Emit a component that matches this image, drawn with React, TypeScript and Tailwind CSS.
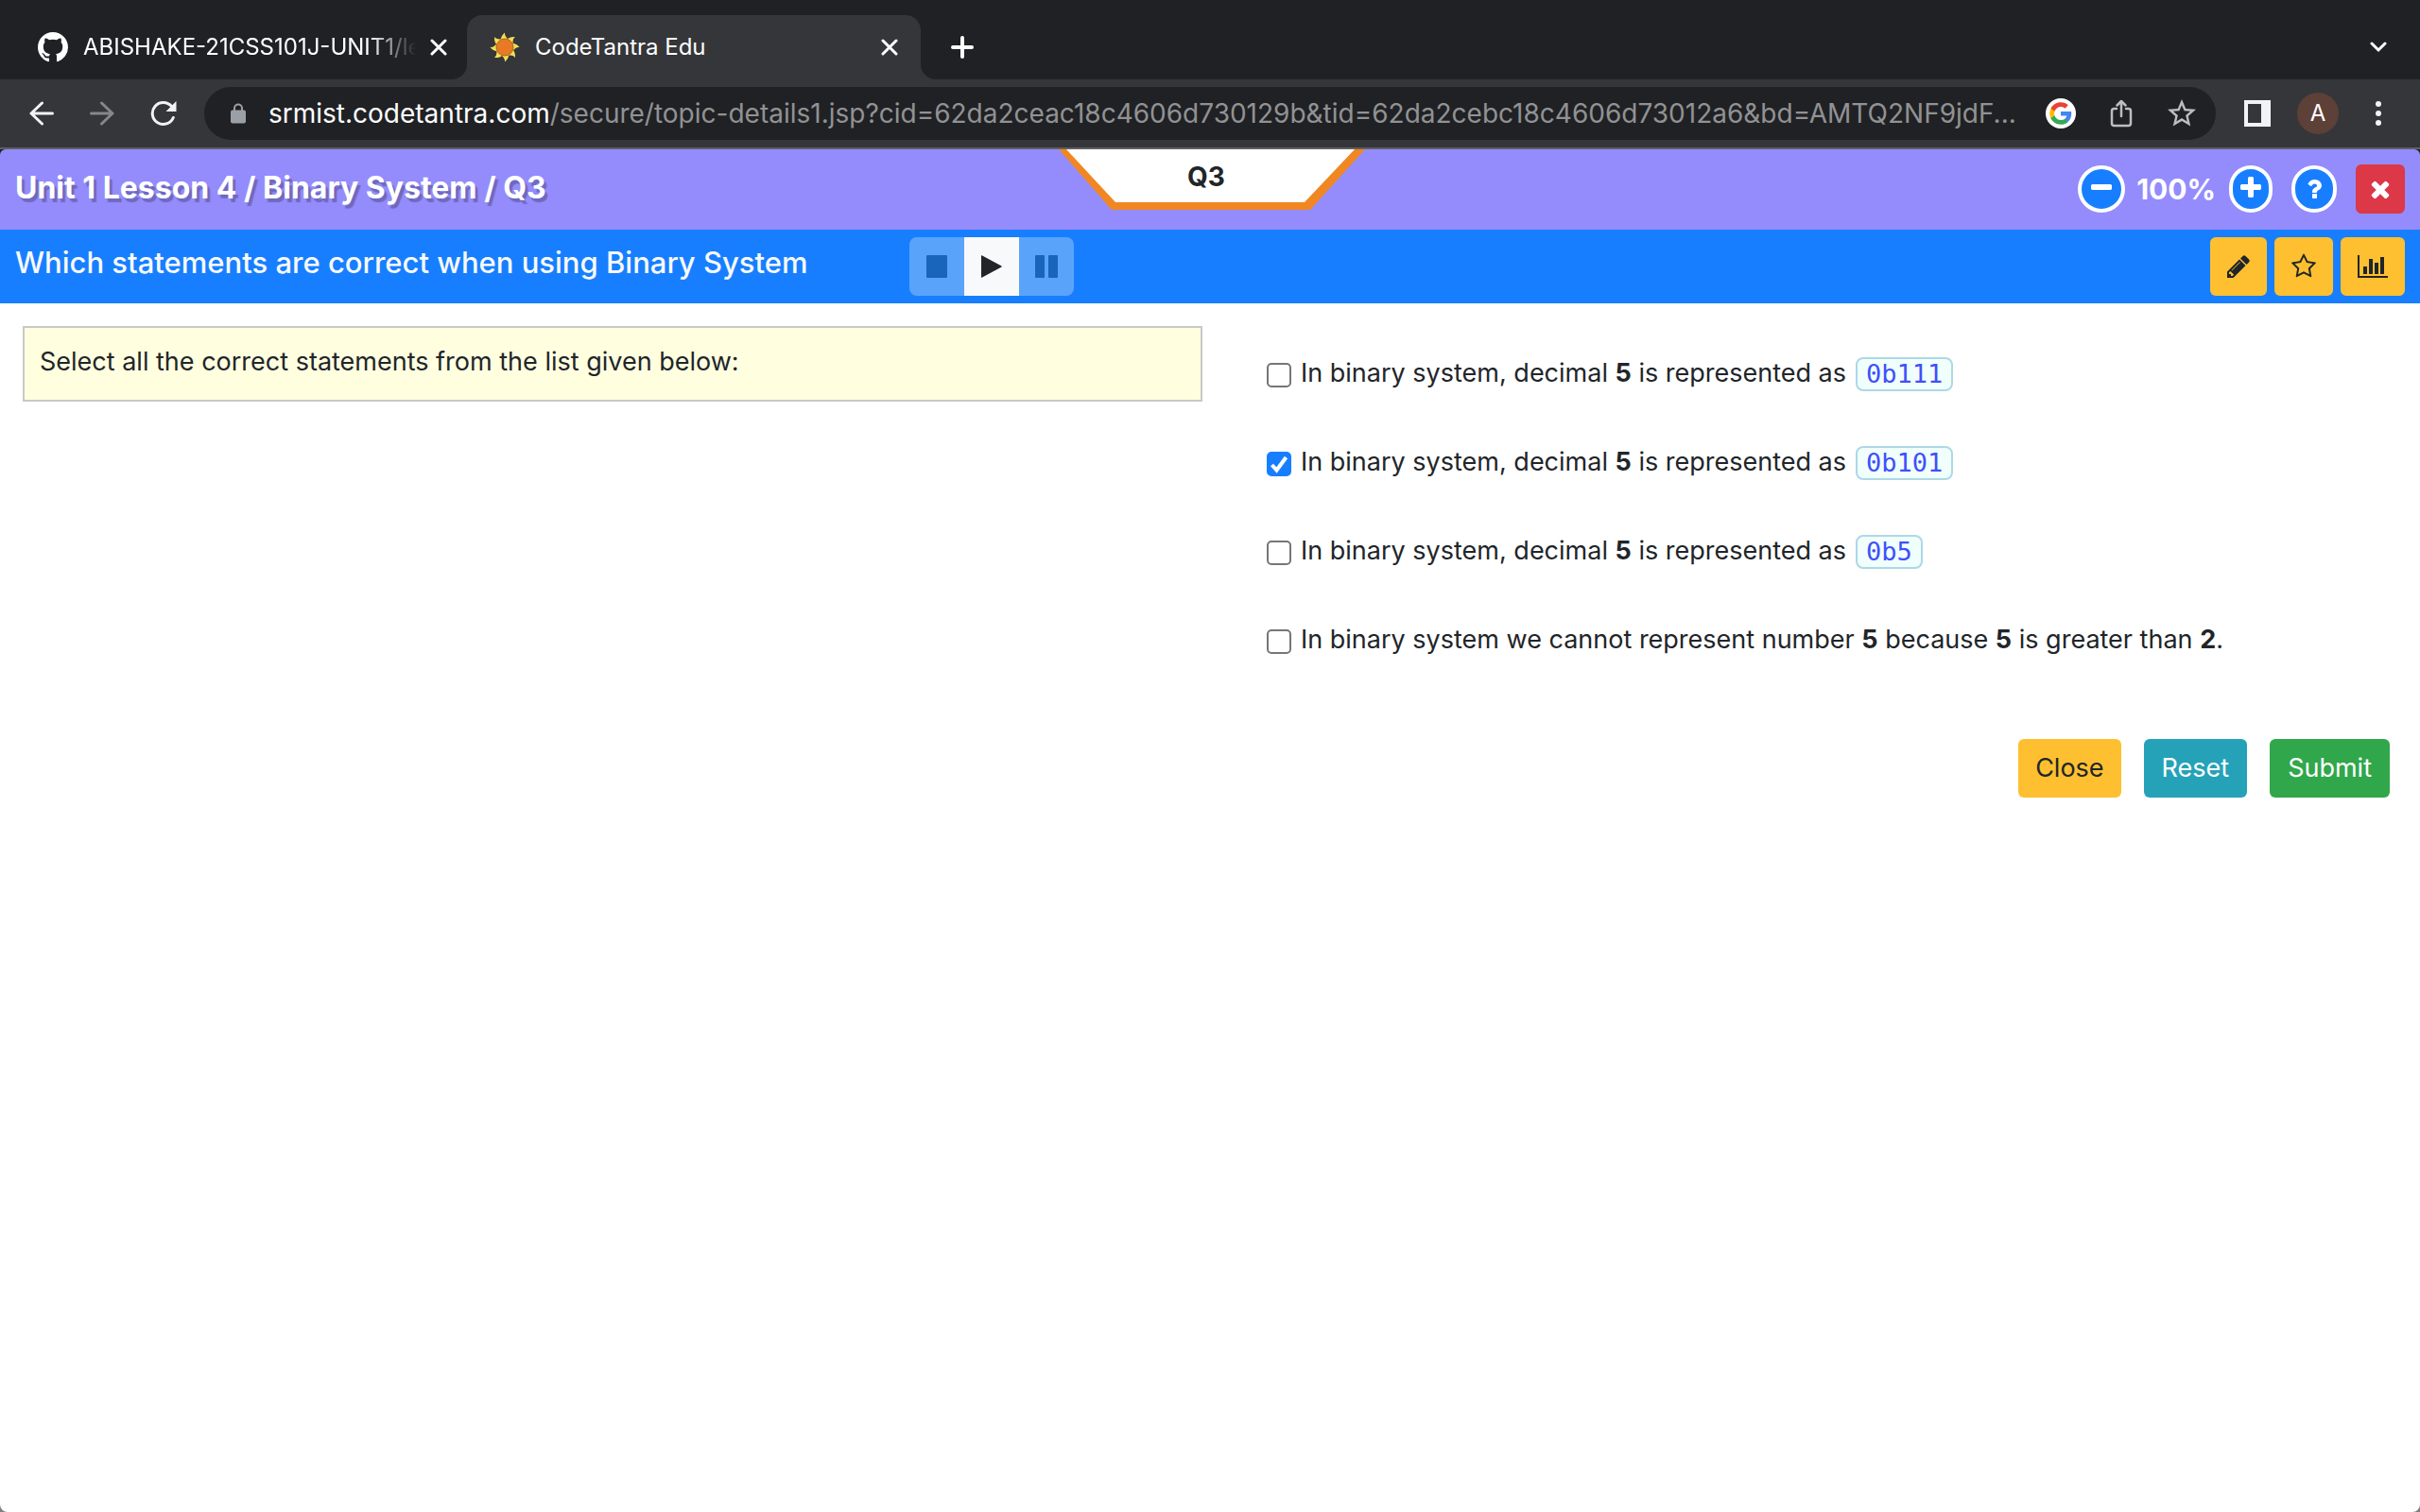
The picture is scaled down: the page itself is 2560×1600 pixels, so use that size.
import React, { useState } from "react";

const GLYPHS = {
  minus:
    "M1600 736v192q0 40-28 68t-68 28h-1216q-40 0-68-28t-28-68v-192q0-40 28-68t68-28h1216q40 0 68 28t28 68z",
  plus:
    "M1600 736v192q0 40-28 68t-68 28h-416v416q0 40-28 68t-68 28h-192q-40 0-68-28t-28-68v-416h-416q-40 0-68-28t-28-68v-192q0-40 28-68t68-28h416v-416q0-40 28-68t68-28h192q40 0 68 28t28 68v416h416q40 0 68 28t28 68z",
  help:
    "M1088 1256v240q0 16-12 28t-28 12h-240q-16 0-28-12t-12-28v-240q0-16 12-28t28-12h240q16 0 28 12t12 28zm316-600q0 54-15.5 101t-35 76.5-55 59.5-57.5 43.5-61 35.5q-41 23-68.5 65t-27.5 67q0 17-12 32.5t-28 15.5h-240q-15 0-25.5-18.5t-10.5-37.5v-45q0-83 65-156.5t143-108.5q59-27 84-56t25-76q0-42-46.5-74t-107.5-32q-65 0-108 29-35 25-107 115-13 16-31 16-12 0-25-8l-164-125q-13-10-15.5-25t5.5-28q160-266 464-266 80 0 161 31t146 83 106 127.5 41 158.5z",
  times:
    "M1490 1322q0 40-28 68l-136 136q-28 28-68 28t-68-28l-294-294-294 294q-28 28-68 28t-68-28l-136-136q-28-28-28-68t28-68l294-294-294-294q-28-28-28-68t28-68l136-136q28-28 68-28t68 28l294 294 294-294q28-28 68-28t68 28l136 136q28 28 28 68t-28 68l-294 294 294 294q28 28 28 68z",
  pencil:
    "M491 1536l91-91-235-235-91 91v107h128v128h107zm523-928q0-22-22-22-10 0-17 7l-542 542q-7 7-7 17 0 22 22 22 10 0 17-7l542-542q7-7 7-17zm-54-192l416 416-832 832h-416v-416zm683 96q0 53-37 90l-166 166-416-416 166-165q36-38 90-38 53 0 91 38l235 234q37 39 37 91z",
  star:
    "M1201 1004l306-297-422-62-189-382-189 382-422 62 306 297-73 421 378-199 377 199zm527-357q0 22-26 48l-363 354 86 500q1 7 1 20 0 50-41 50-19 0-40-12l-449-236-449 236q-22 12-40 12-21 0-31.5-14.5t-10.5-35.5q0-6 2-20l86-500-364-354q-25-27-25-48 0-37 56-46l502-73 225-455q19-41 49-41t49 41l225 455 502 73q56 9 56 46z",
  chart:
    "M640 896v512h-256v-512h256zm384-512v1024h-256v-1024h256zm1024 1152v128h-2048v-1536h128v1408h1920zm-640-896v768h-256v-768h256zm384-384v1152h-256v-1152h256z",
};

function Glyph({ name }: { name: keyof typeof GLYPHS }) {
  const wide = name === "chart";
  return (
    <svg
      viewBox={wide ? "0 0 2048 1792" : "0 0 1792 1792"}
      className={wide ? "h-7 w-8" : "size-7"}
      fill="currentColor"
      aria-hidden="true"
    >
      <path d={GLYPHS[name]} />
    </svg>
  );
}

function TabClose() {
  return (
    <svg viewBox="0 0 18 18" className="size-[18px]" aria-hidden="true">
      <path d="M2 2L16 16M16 2L2 16" stroke="#fff" strokeWidth="3" strokeLinecap="round" />
    </svg>
  );
}

function Sun() {
  const rays = [0, 45, 90, 135, 180, 225, 270, 315];
  return (
    <svg viewBox="0 0 32 32" className="size-8" aria-hidden="true">
      {rays.map((a) => (
        <path
          key={a}
          d="M11.500 9C12 5.500 13 3 16 0.500C15.500 3.500 17.500 5.500 20.500 8.500L16 14Z"
          fill="#f3df55"
          transform={`rotate(${a} 16 16)`}
        />
      ))}
      <circle cx="16" cy="16" r="9" fill="#e87a26" stroke="#a8641f" strokeWidth="1" />
    </svg>
  );
}

function TabStrip() {
  return (
    <div className="flex h-21 items-end bg-[#202124] text-2xl text-white">
      <div className="flex h-17 w-[494px] items-center pl-10">
        <svg viewBox="0 0 16 16" className="size-8 shrink-0" fill="#fff" aria-hidden="true">
          <path d="M8 0C3.58 0 0 3.58 0 8c0 3.54 2.29 6.53 5.47 7.59.4.07.55-.17.55-.38 0-.19-.01-.82-.01-1.490-2.010.37-2.530-.49-2.690-.94-.09-.23-.48-.94-.82-1.130-.28-.15-.68-.52-.01-.53.63-.01 1.080.58 1.230.82.72 1.210 1.870.87 2.330.66.07-.52.28-.87.51-1.070-1.780-.2-3.640-.89-3.640-3.950 0-.87.31-1.590.82-2.150-.08-.2-.36-1.020.08-2.120 0 0 .67-.21 2.200.82.64-.18 1.320-.27 2-.27.68 0 1.360.09 2 .27 1.530-1.040 2.200-.82 2.200-.82.44 1.100.16 1.920.08 2.120.51.56.82 1.270.82 2.150 0 3.070-1.870 3.750-3.650 3.950.29.25.54.73.54 1.480 0 1.070-.01 1.930-.01 2.200 0 .21.15.46.55.38A8.013 8.013 0 0016 8c0-4.420-3.580-8-8-8z" />
        </svg>
        <span className="ml-4 w-[352px] overflow-hidden whitespace-nowrap [mask-image:linear-gradient(to_right,#000_86%,transparent)]">
          ABISHAKE-21CSS101J-UNIT1/le
        </span>
        <button type="button" aria-label="Close tab" className="ml-[15px]">
          <TabClose />
        </button>
      </div>
      <div className="relative flex h-17 w-[480px] items-center rounded-t-2xl bg-[#35363a] pr-6 pl-6">
        <svg viewBox="0 0 16 16" className="absolute bottom-0 -left-4 size-4" aria-hidden="true">
          <path d="M16 0V16H0A16 16 0 0 0 16 0Z" fill="#35363a" />
        </svg>
        <svg viewBox="0 0 16 16" className="absolute -right-4 bottom-0 size-4" aria-hidden="true">
          <path d="M0 0V16H16A16 16 0 0 1 0 0Z" fill="#35363a" />
        </svg>
        <Sun />
        <span className="ml-4">CodeTantra Edu</span>
        <button type="button" aria-label="Close tab" className="ml-auto">
          <TabClose />
        </button>
      </div>
      <button type="button" aria-label="New tab" className="ml-8 flex h-17 items-center">
        <svg viewBox="0 0 24 24" className="size-6" aria-hidden="true">
          <path d="M12 2V22M2 12H22" stroke="#fff" strokeWidth="4" strokeLinecap="round" />
        </svg>
      </button>
      <button type="button" aria-label="Search tabs" className="mr-[35px] ml-auto flex h-17 items-center">
        <svg viewBox="0 0 18 12" className="h-3 w-[18px]" aria-hidden="true">
          <path d="M2 2L9 9L16 2" fill="none" stroke="#fff" strokeWidth="3" strokeLinecap="round" />
        </svg>
      </button>
    </div>
  );
}

function Toolbar() {
  return (
    <div className="flex h-[74px] items-center border-b-2 border-[#5f6063] bg-[#35363a] pr-[41px] pl-[31px]">
      <button type="button" aria-label="Back">
        <svg viewBox="0 0 26 26" className="size-[26px]" fill="none" stroke="#f1f3f4" strokeWidth="3" strokeLinecap="round" strokeLinejoin="round">
          <path d="M24.500 13H2M13.500 2L2 13L13.500 24" />
        </svg>
      </button>
      <button type="button" aria-label="Forward" className="ml-[38px]">
        <svg viewBox="0 0 26 26" className="size-[26px]" fill="none" stroke="#86878a" strokeWidth="3" strokeLinecap="round" strokeLinejoin="round">
          <path d="M1.500 13H24M12.500 2L24 13L12.500 24" />
        </svg>
      </button>
      <button type="button" aria-label="Reload" className="ml-[38px]">
        <svg viewBox="0 0 28 28" className="size-7">
          <path d="M24.300 18.500A11.500 11.500 0 1 1 22.500 6.500" fill="none" stroke="#f1f3f4" strokeWidth="3" strokeLinecap="round" />
          <path d="M27.500 1V12H16.500Z" fill="#f1f3f4" />
        </svg>
      </button>
      <div className="ml-[29px] flex h-14 min-w-0 flex-1 items-center rounded-full bg-[#202124] pr-[18px] pl-7">
        <svg viewBox="0 0 16 22" className="h-[22px] w-4 shrink-0" aria-hidden="true">
          <path d="M4 9V5.500A4 4 0 0 1 12 5.500V9" fill="none" stroke="#9aa0a6" strokeWidth="2" />
          <rect y="7.500" width="16" height="14" rx="2" fill="#9aa0a6" />
        </svg>
        <div role="textbox" aria-label="Address" className="ml-6 min-w-0 flex-1 truncate text-[28px] leading-10 text-[#919294]">
          <span className="text-white">srmist.codetantra.com</span>
          /secure/topic-details1.jsp?cid=62da2ceac18c4606d730129b&amp;tid=62da2cebc18c4606d73012a6&amp;bd=AMTQ2NF9jdF...
        </div>
        <button type="button" aria-label="Search with Google" className="ml-4 flex size-8 shrink-0 items-center justify-center rounded-full bg-white">
          <svg viewBox="0 0 48 48" className="size-6">
            <path fill="#4285f4" d="M46.500 24.500c0-1.600-.2-3.200-.5-4.700H24v9h12.600c-.5 2.900-2.200 5.400-4.700 7v5.900h7.600c4.500-4.100 7-10.200 7-17.200z" />
            <path fill="#34a853" d="M24 47.500c6.400 0 11.700-2.100 15.600-5.700L32 35.900c-2.100 1.400-4.800 2.300-8 2.300-6.100 0-11.300-4.100-13.200-9.700H3v6.100C6.900 42.300 14.800 47.500 24 47.500z" />
            <path fill="#fbbc05" d="M10.800 28.500c-.5-1.400-.7-3-.7-4.500s.3-3.100.7-4.500v-6.100H3C1.400 16.600.5 20.200.5 24S1.400 31.400 3 34.600z" />
            <path fill="#ea4335" d="M24 9.800c3.400 0 6.500 1.200 9 3.500l6.700-6.700C35.700 2.800 30.400.5 24 .5 14.800.5 6.900 5.700 3 13.400l7.800 6.100C12.700 13.900 17.900 9.800 24 9.800z" />
          </svg>
        </button>
        <button type="button" aria-label="Share" className="ml-9">
          <svg viewBox="0 0 24 30" className="h-[30px] w-6" fill="none" stroke="#bcbdbe" strokeWidth="2.500" strokeLinecap="round" strokeLinejoin="round">
            <path d="M7 10H4.500A2.500 2.500 0 0 0 2 12.500V25.500A2.500 2.500 0 0 0 4.500 28H19.500A2.500 2.500 0 0 0 22 25.500V12.500A2.500 2.500 0 0 0 19.500 10H17M12 18V2.500M7.500 6.500L12 2L16.500 6.500" />
          </svg>
        </button>
        <button type="button" aria-label="Bookmark" className="ml-[34px]">
          <svg viewBox="0 0 24 24" className="size-9" fill="#bcbdbe">
            <path d="M22 9.240l-7.190-.62L12 2 9.190 8.630 2 9.240l5.460 4.730L5.820 21 12 17.270 18.180 21l-1.630-7.030L22 9.240zM12 15.400l-3.760 2.270 1-4.280-3.320-2.880 4.380-.38L12 6.100l1.710 4.040 4.380.38-3.320 2.880 1 4.280L12 15.400z" />
          </svg>
        </button>
      </div>
      <button type="button" aria-label="Side panel" className="ml-[30px]">
        <svg viewBox="0 0 28 28" className="size-7">
          <path fillRule="evenodd" d="M0 0H28V28H0ZM4 4V24H18V4Z" fill="#f1f3f4" />
        </svg>
      </button>
      <button type="button" aria-label="Profile" className="ml-7 flex size-11 items-center justify-center rounded-full bg-[#5d4037] text-2xl text-white">
        A
      </button>
      <button type="button" aria-label="Menu" className="ml-[39px]">
        <svg viewBox="0 0 6 26" className="h-[26px] w-[6px]" fill="#f1f3f4">
          <circle cx="3" cy="3" r="3" />
          <circle cx="3" cy="13" r="3" />
          <circle cx="3" cy="23" r="3" />
        </svg>
      </button>
    </div>
  );
}

function LessonHeader() {
  return (
    <div className="bg-[#202124]">
      <header className="relative flex h-[85px] items-center justify-between rounded-t-md bg-[#948cfc] px-4 text-white">
        <h1 className="pb-1 text-[32px] leading-10 font-bold [text-shadow:3px_4px_1px_rgba(0,0,0,0.25)]">
          Unit 1 Lesson 4 / Binary System / Q3
        </h1>
        <div className="absolute top-0 left-1/2 h-16 w-82 -translate-x-1/2">
          <svg viewBox="0 0 328 64" className="h-16 w-82" aria-hidden="true">
            <path d="M4 0H328L270 64H60Z" fill="#f08722" />
            <path d="M12 0H317L264 56H64Z" fill="#fff" />
          </svg>
          <span className="absolute inset-x-0 top-0 pr-2 text-center text-[28px] leading-[58px] font-bold text-[#212529]">
            Q3
          </span>
        </div>
        <div className="flex items-center pb-0.5">
          <button type="button" aria-label="Zoom out" className="flex h-[50px] w-[50px] items-center justify-center rounded-full border-4 border-white bg-[#177fff] pb-0.5">
            <Glyph name="minus" />
          </button>
          <span className="mr-[14px] ml-3 text-[30px] leading-10 font-bold">100%</span>
          <button type="button" aria-label="Zoom in" className="flex h-[50px] w-[46px] items-center justify-center rounded-full border-4 border-white bg-[#177fff] pb-0.5">
            <Glyph name="plus" />
          </button>
          <button type="button" aria-label="Help" className="ml-5 flex h-[50px] w-12 items-center justify-center rounded-full border-4 border-white bg-[#177fff]">
            <Glyph name="help" />
          </button>
          <button type="button" aria-label="Close question" className="ml-5 flex size-13 items-center justify-center rounded-md bg-[#dc3848]">
            <Glyph name="times" />
          </button>
        </div>
      </header>
    </div>
  );
}

function QuestionBar() {
  return (
    <div className="grid h-[78px] grid-cols-[3fr_5fr] items-center bg-[#177fff] pr-4">
      <h2 className="pb-2 pl-4 text-[31px] leading-10 font-medium text-[#f8f9fa]">
        Which statements are correct when using Binary System
      </h2>
      <div className="flex justify-between pl-2">
        <div className="flex h-[62px] overflow-hidden rounded-lg">
          <button type="button" disabled aria-label="Stop" className="flex w-[58px] items-center justify-center bg-[#5aa3fb]">
            <svg viewBox="0 0 24 24" className="size-6" fill="#1965bc">
              <rect x="1" width="22" height="24" rx="1" />
            </svg>
          </button>
          <button type="button" aria-label="Play" className="flex w-[58px] items-center justify-center bg-[#f8f9fa]">
            <svg viewBox="0 0 24 24" className="size-6" fill="#212529">
              <path d="M1 0.500Q1 0 1.600 0.200L22.500 11.600Q23 12 22.500 12.400L1.600 23.800Q1 24 1 23.500Z" />
            </svg>
          </button>
          <button type="button" disabled aria-label="Pause" className="flex w-[58px] items-center justify-center bg-[#5aa3fb]">
            <svg viewBox="0 0 24 24" className="size-6" fill="#1965bc">
              <rect width="10" height="24" rx="1" />
              <rect x="14" width="10" height="24" rx="1" />
            </svg>
          </button>
        </div>
        <div className="flex gap-2 text-[#212529]">
          <button type="button" aria-label="Edit" className="flex h-[62px] w-15 items-center justify-center rounded-md bg-[#fec030]">
            <Glyph name="pencil" />
          </button>
          <button type="button" aria-label="Favourite" className="flex h-[62px] w-[62px] items-center justify-center rounded-md bg-[#fec030]">
            <Glyph name="star" />
          </button>
          <button type="button" aria-label="Statistics" className="flex h-[62px] w-17 items-center justify-center rounded-md bg-[#fec030]">
            <Glyph name="chart" />
          </button>
        </div>
      </div>
    </div>
  );
}

const OPTIONS: { text: React.ReactNode; code?: string }[] = [
  { text: <>In binary system, decimal <b>5</b> is represented as</>, code: "0b111" },
  { text: <>In binary system, decimal <b>5</b> is represented as</>, code: "0b101" },
  { text: <>In binary system, decimal <b>5</b> is represented as</>, code: "0b5" },
  {
    text: (
      <>
        In binary system we cannot represent number <b>5</b> because <b>5</b> is greater than <b>2</b>.
      </>
    ),
  },
];

function Question() {
  const [checked, setChecked] = useState([false, true, false, false]);
  const toggle = (i: number) => setChecked(checked.map((c, j) => (j === i ? !c : c)));
  return (
    <main className="grid grid-cols-2 text-[27px] leading-10 text-[#212529]">
      <section className="pt-6 pr-2 pl-6">
        <p className="border-2 border-[#c8c8c8] bg-[#ffffe0] px-4 pt-4 pb-5">
          Select all the correct statements from the list given below:
        </p>
      </section>
      <form className="pt-7 pr-8 pl-15" onSubmit={(e) => e.preventDefault()}>
        {OPTIONS.map((o, i) => (
          <label key={i} className="flex h-[94px] items-center gap-2.5">
            <span className="mt-0.5 grid">
              <input
                type="checkbox"
                checked={checked[i]}
                onChange={() => toggle(i)}
                className="peer col-start-1 row-start-1 size-[26px] appearance-none rounded-[5px] border-2 border-[#767676] bg-white checked:border-[#177fff] checked:bg-[#177fff]"
              />
              <svg viewBox="0 0 26 26" className="invisible col-start-1 row-start-1 size-[26px] peer-checked:visible" aria-hidden="true">
                <path d="M5.500 14L10.500 19.500L20.500 6" fill="none" stroke="#fff" strokeWidth="4" />
              </svg>
            </span>
            <span className="pb-0.5">{o.text}</span>
            {o.code && (
              <code className="rounded-lg border-2 border-[#add8e6] bg-[#f0fffc] px-[9px] font-['DejaVu_Sans_Mono',monospace] text-[27px] leading-8 text-[#3f4ffa]">
                {o.code}
              </code>
            )}
          </label>
        ))}
        <div className="mt-[57px] flex justify-end gap-6">
          <button type="button" className="h-[62px] rounded-md bg-[#fec030] px-[18px]">Close</button>
          <button type="reset" className="h-[62px] rounded-md bg-[#26a2b8] px-[19px] text-white">Reset</button>
          <button type="submit" className="h-[62px] rounded-md bg-[#30a74a] px-[19px] text-white">Submit</button>
        </div>
      </form>
    </main>
  );
}

export default function App() {
  return (
    <div className="flex min-h-screen flex-col bg-[#7f7f7f] font-[Inter,sans-serif]">
      <TabStrip />
      <Toolbar />
      <div className="flex-1 rounded-b-lg bg-white">
        <LessonHeader />
        <QuestionBar />
        <Question />
      </div>
    </div>
  );
}
